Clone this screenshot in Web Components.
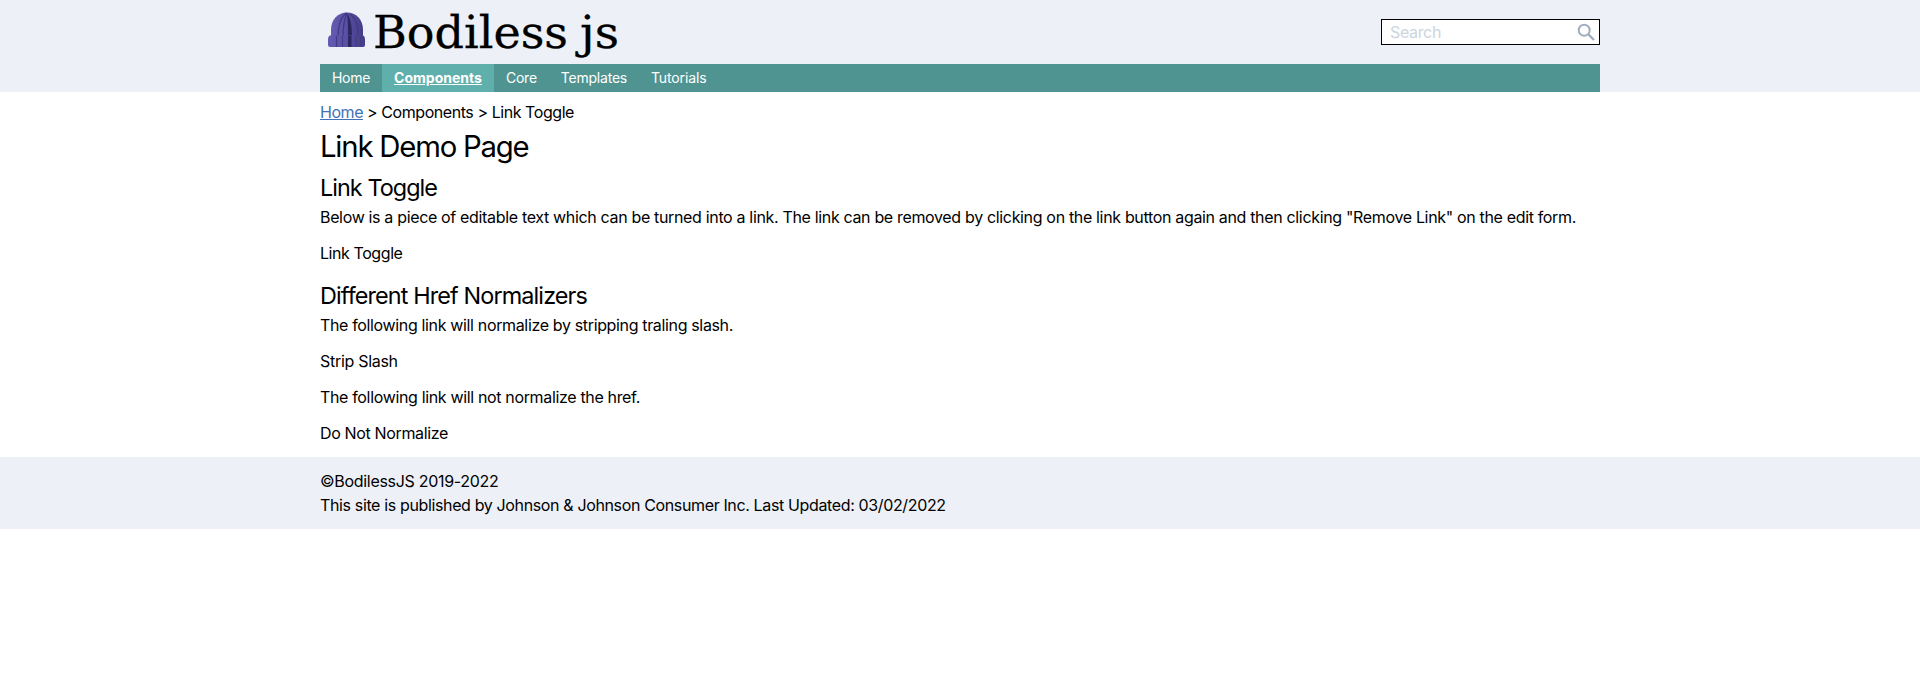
<!DOCTYPE html>
<html lang="en">
<head>
<meta charset="utf-8">
<title>Link Demo Page</title>
<style>
body{margin:0;background:#fff;color:#000;font:16px/24px Inter,"Liberation Sans",sans-serif}
</style>
</head>
<body>
<demo-page></demo-page>
<script>
const define = (name, html, init) => customElements.define(name, class extends HTMLElement {
  connectedCallback() {
    if (this.shadowRoot) return;
    const t = document.createElement('template');
    t.innerHTML = html;
    this.attachShadow({mode: 'open'}).append(t.content.cloneNode(true));
    if (init) init(this);
  }
});

// A single line of text tracked to a given advance width.
define('text-line', `<style>:host{display:inline-block;white-space:pre;text-decoration:var(--line-decoration,none)}</style><slot></slot>`, el => {
  const w = parseFloat(el.getAttribute('w'));
  const n = el.textContent.length;
  const range = document.createRange();
  range.selectNodeContents(el);
  const fit = () => {
    el.style.letterSpacing = '0px';
    const natural = range.getBoundingClientRect().width;
    if (natural) el.style.letterSpacing = ((w - natural) / n) + 'px';
    el.style.width = w + 'px';
  };
  fit();
  requestAnimationFrame(fit);
});

define('site-logo', `<style>:host{display:block;width:310px;height:64px}svg{display:block}text{font-family:"DejaVu Serif","Liberation Serif",serif;white-space:pre}</style>
<svg width="310" height="64" viewBox="0 0 310 64">
  <defs><linearGradient id="g"><stop offset="0" stop-color="#645bb2"/><stop offset=".5" stop-color="#594fa5"/><stop offset="1" stop-color="#463c85"/></linearGradient></defs>
  <path d="M11 37V30C11 19 18 12.500 27 12.500S43 19 43 30V37Z" fill="url(#g)"/>
  <path d="M26 13C20 18 18 26 18 37M27 13C24 20 23 27 23 37M30 14C37 20 38 27 38 37" fill="none" stroke="#443a83" stroke-width="1.300"/>
  <path d="M27 13C28 20 28 28 28 37H32C32 27 31 19 27 13Z" fill="#2d2661"/>
  <path d="M10 35.500H43Q45 36 45 40V45Q45 47 43 47H10Q8 47 8 45V40Q8 36 10 35.500Z" fill="url(#g)"/>
  <path d="M16.500 36V47M22.500 36V47M36 36V47M41 36V47" stroke="#443a83" stroke-width="1.200"/>
  <path d="M28 36H31.500V47H28Z" fill="#2d2661"/>
  <text y="47.500" font-size="44" stroke="#000" stroke-width=".3"><tspan x="53" textLength="195" lengthAdjust="spacingAndGlyphs">Bodiless</tspan> <tspan x="260" y="47.500" textLength="39" lengthAdjust="spacingAndGlyphs">js</tspan></text>
</svg>`);

define('search-box', `<style>
:host{display:flex;box-sizing:border-box;width:219px;height:26px;border:1px solid #000;background:#fff;padding:0 4px 0 8px;justify-content:space-between;color:#cbd5e0}
svg{display:block;margin-top:3px}</style>
<text-line w="51">Search</text-line>
<svg width="18" height="18" viewBox="0 0 18 18" fill="none" stroke="#a0aec0" stroke-width="2"><circle cx="7.200" cy="7.200" r="5.500"/><path d="M11.200 11.200L17 17" stroke-width="2.400"/></svg>`);

define('nav-item', `<style>
:host{display:block;padding:4px 12px;font-size:14px;line-height:20px;color:#fff;height:20px}
:host([active]){background:#5fafac;font-weight:700;--line-decoration:underline}</style><slot></slot>`);

define('site-header', `<style>
:host{display:block;background:#edf0f6}
.wrap{width:1280px;margin:0 auto}
.top{display:flex;justify-content:space-between;height:64px;align-items:center}
nav{display:flex;background:#4f9490;height:28px}</style>
<div class="wrap"><div class="top"><site-logo></site-logo><search-box></search-box></div>
<nav><nav-item><text-line w="38">Home</text-line></nav-item><nav-item active><text-line w="88">Components</text-line></nav-item><nav-item><text-line w="30.800">Core</text-line></nav-item><nav-item><text-line w="66.200">Templates</text-line></nav-item><nav-item><text-line w="55.500">Tutorials</text-line></nav-item></nav></div>`);

define('bread-crumbs', `<style>:host{display:flex;padding-top:8px;height:24px}a{color:#4272b5;--line-decoration:underline}</style>
<a href="#"><text-line w="43">Home</text-line></a><text-line w="211"> > Components > Link Toggle</text-line>`);

define('page-content', `<style>
:host{display:block;width:1280px;margin:0 auto}
h1,h2,p{margin:0;font-weight:400;display:flex}
h1,h2{box-sizing:border-box}
h2{padding-top:1px}
h1{font-size:29.300px;height:45px;line-height:45px}h2{font-size:23.400px;height:36px;line-height:36px}p{margin-bottom:12px}</style>
<bread-crumbs></bread-crumbs>
<h1><text-line w="208.500">Link Demo Page</text-line></h1>
<h2><text-line w="117">Link Toggle</text-line></h2>
<p><text-line w="1256">Below is a piece of editable text which can be turned into a link. The link can be removed by clicking on the link button again and then clicking "Remove Link" on the edit form.</text-line></p>
<p><text-line w="82.500">Link Toggle</text-line></p>
<h2><text-line w="267">Different Href Normalizers</text-line></h2>
<p><text-line w="413">The following link will normalize by stripping traling slash.</text-line></p>
<p><text-line w="77.800">Strip Slash</text-line></p>
<p><text-line w="320">The following link will not normalize the href.</text-line></p>
<p><text-line w="128">Do Not Normalize</text-line></p>`);

define('site-footer', `<style>
:host{display:block;background:#edf0f6;padding:12px 0}
div{width:1280px;margin:0 auto;display:flex;flex-direction:column}</style>
<div><text-line w="178.500">©BodilessJS 2019-2022</text-line><text-line w="625.700">This site is published by Johnson &amp; Johnson Consumer Inc. Last Updated: 03/02/2022</text-line></div>`);

define('demo-page', `<style>:host{display:block}</style><site-header></site-header><page-content></page-content><site-footer></site-footer>`);
</script>
</body>
</html>
